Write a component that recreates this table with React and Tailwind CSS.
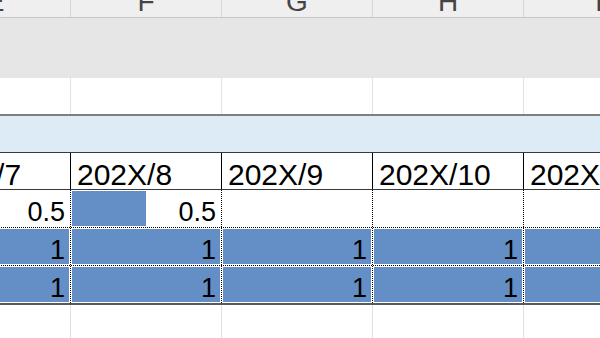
import React from 'react';

const COLS = ['E', 'F', 'G', 'H', 'I'];
const MONTHS = ['202X/7', '202X/8', '202X/9', '202X/10', '202X/11'];

// data bar rows: value per column (null = empty cell)
const ROWS = [
  [0.5, 0.5, null, null, null],
  [1, 1, 1, 1, 1],
  [1, 1, 1, 1, 1],
];

const font = { fontFamily: '"Liberation Sans", Arial, sans-serif' };

function GridRow({ height, line, children }) {
  return (
    <div className={`flex ml-[-80px] ${height}`}>
      {COLS.map((c, i) => (
        <div key={c} className={`w-[151px] shrink-0 h-full border-r ${line}`}>
          {children ? children(i) : null}
        </div>
      ))}
    </div>
  );
}

function BarCell({ value, last }) {
  return (
    <div className="w-[151px] shrink-0 h-full p-px border-r border-dotted border-black">
      <div
        className="h-full flex justify-end bg-no-repeat"
        style={
          value != null
            ? { backgroundImage: 'linear-gradient(#638ec6,#638ec6)', backgroundSize: `${value * 100}% 100%` }
            : undefined
        }
      >
        {value != null && (
          <span className="pt-[7px] pr-[4px] text-[27px] leading-[29px] text-black">{value}</span>
        )}
      </div>
    </div>
  );
}

export default function App() {
  return (
    <div className="w-[600px] h-[338px] overflow-hidden bg-white" style={font}>
      {/* column letters */}
      <div className="h-[18px] border-b border-[#c8c8c8] bg-[#efefef] overflow-hidden">
        <GridRow height="h-full" line="border-[#d6d6d6]">
          {i => (
            <div className="flex justify-center">
              <span className="mt-[-12px] text-[28px] leading-[28px] text-[#444]">{COLS[i]}</span>
            </div>
          )}
        </GridRow>
      </div>

      {/* frozen title band */}
      <div className="h-[60px] bg-[#e6e6e6]" />

      <div className="border-b-2 border-[#7f7f7f]">
        <GridRow height="h-[36px]" line="border-[#e2e2e2]" />
      </div>

      <div className="h-[37px] bg-[#ddebf7] border-b border-[#3a3a3a]" />

      {/* month headers */}
      <div className="border-b border-[#3a3a3a]">
        <GridRow height="h-[36px]" line="border-black">
          {i => (
            <div className="pl-[6px] pt-[7px] text-[30px] leading-[29px] text-black whitespace-nowrap">
              {MONTHS[i]}
            </div>
          )}
        </GridRow>
      </div>

      {ROWS.map((row, r) => (
        <div
          key={r}
          className={
            r === ROWS.length - 1
              ? 'flex ml-[-80px] h-[39px] border-b-2 border-[#595959]'
              : 'flex ml-[-80px] h-[38px] border-b border-dotted border-black'
          }
        >
          {row.map((v, i) => (
            <BarCell key={i} value={v} />
          ))}
        </div>
      ))}

      <GridRow height="h-[40px]" line="border-[#e0e0e0]" />
    </div>
  );
}
